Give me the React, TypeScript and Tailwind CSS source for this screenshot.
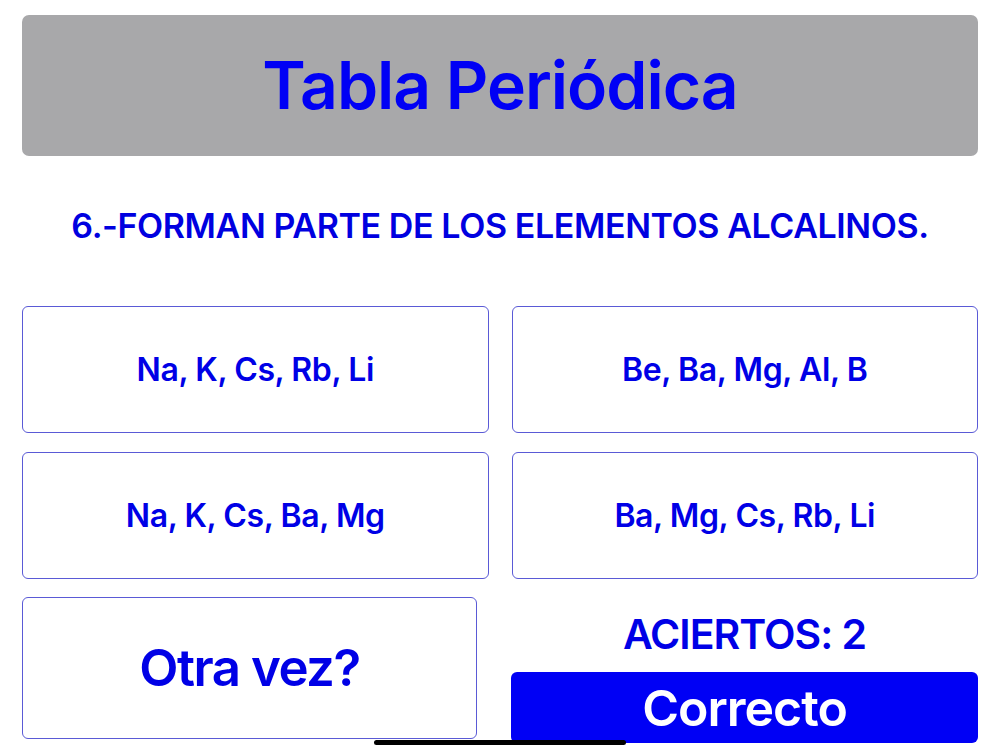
import React from "react";

const font = { fontFamily: "Inter, 'Noto Sans', sans-serif" };

function Option({ label }: { label: string }) {
  return (
    <div className="h-[127px] rounded-[6px] border border-[#5a5ad6] bg-white flex items-center justify-center">
      <span className="text-[32px] font-semibold tracking-[-0.4px] text-[#0000e6]">{label}</span>
    </div>
  );
}

export default function App() {
  return (
    <div className="relative w-[1000px] h-[750px] bg-white overflow-hidden" style={font}>
      <div className="px-[22px] pt-[15px]">
        <div className="h-[141px] rounded-[7px] bg-[#a8a8aa] flex items-center justify-center">
          <h1 className="text-[66px] font-semibold tracking-[-1px] text-[#0000f5] leading-none pb-[2px]">
            Tabla Periódica
          </h1>
        </div>
        <div className="h-[150px] flex items-center justify-center pb-[12px]">
          <p className="text-[34px] font-semibold tracking-[-0.4px] text-[#0000e0]">
            6.-FORMAN PARTE DE LOS ELEMENTOS ALCALINOS.
          </p>
        </div>
        <div className="grid grid-cols-2 gap-x-[23px] gap-y-[19px]">
          <Option label="Na, K, Cs, Rb, Li" />
          <Option label="Be, Ba, Mg, Al, B" />
          <Option label="Na, K, Cs, Ba, Mg" />
          <Option label="Ba, Mg, Cs, Rb, Li" />
        </div>
        <div className="mt-[18px] flex">
          <div className="w-[455px] h-[142px] rounded-[6px] border border-[#5a5ad6] flex items-center justify-center">
            <span className="text-[51px] font-semibold tracking-[-1.5px] text-[#0000e6]">Otra vez?</span>
          </div>
          <div className="ml-[34px] flex-1 flex flex-col">
            <div className="h-[75px] flex items-center justify-center">
              <span className="text-[41px] font-semibold tracking-[-1px] text-[#0000e6]">ACIERTOS: 2</span>
            </div>
            <div className="h-[71px] rounded-[6px] bg-[#0000f5] flex items-center justify-center">
              <span className="text-[50px] font-semibold tracking-[-1px] text-white leading-none">Correcto</span>
            </div>
          </div>
        </div>
      </div>
      <div className="absolute left-[374px] top-[740px] w-[252px] h-[5px] rounded-full bg-black" />
    </div>
  );
}
